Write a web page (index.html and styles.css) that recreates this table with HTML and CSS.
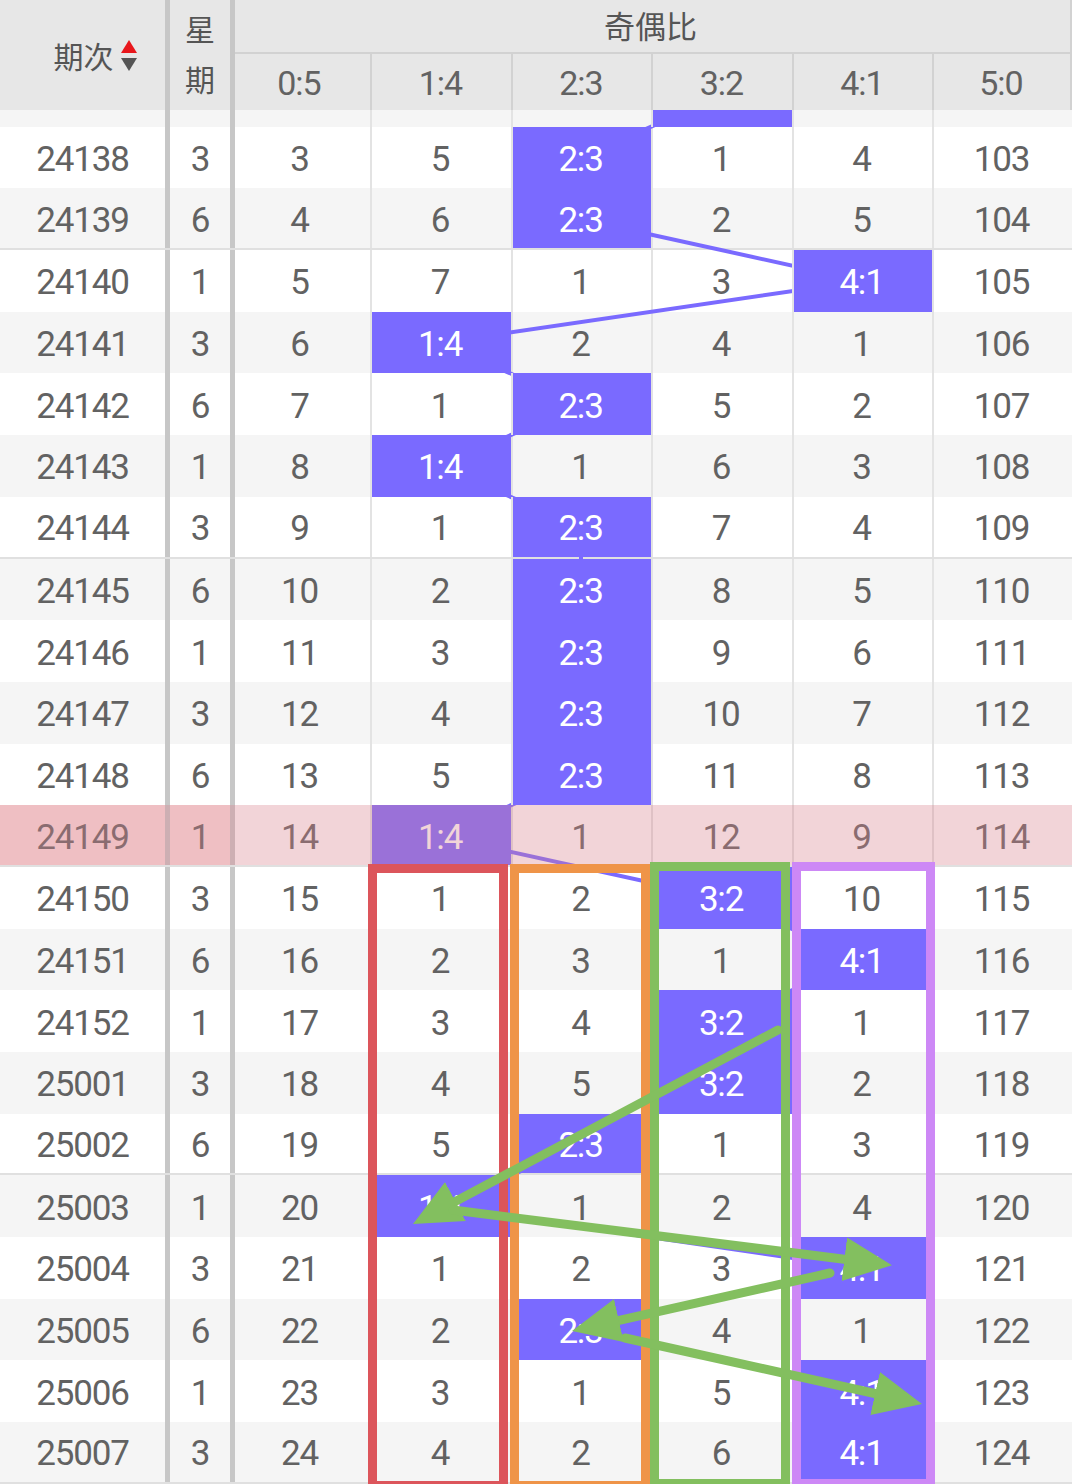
FILE: index.html
```html
<!DOCTYPE html>
<html lang="zh">
<head>
<meta charset="utf-8">
<title>奇偶比走势</title>
<link rel="stylesheet" href="styles.css">
</head>
<body>
<div class="page">
  <div class="head">
    <div class="h-issue"><span>期次</span>
      <svg class="sort" width="18" height="34" viewBox="0 0 18 34"><path d="M9 1 L17 14 L1 14 Z" fill="#e8171c"/><path d="M1 19 L17 19 L9 32 Z" fill="#555"/></svg>
    </div>
    <div class="h-sep sep-a"></div>
    <div class="h-week">星<br>期</div>
    <div class="h-sep sep-b"></div>
    <div class="h-group">奇偶比</div>
    <div class="h-sub c05">0:5</div>
    <div class="h-sub">1:4</div>
    <div class="h-sub">2:3</div>
    <div class="h-sub">3:2</div>
    <div class="h-sub">4:1</div>
    <div class="h-sub last">5:0</div>
  </div>

  <div class="body">
    <div class="rows">
      <div class="row g"><div class="c"></div><div class="s"></div><div class="c"></div><div class="s"></div><div class="c z"></div><div class="c d"></div><div class="c d"></div><div class="c d p"></div><div class="c d"></div><div class="c d"></div></div>
      <div class="row"><div class="c">24138</div><div class="s"></div><div class="c">3</div><div class="s"></div><div class="c z">3</div><div class="c d">5</div><div class="c d p">2:3</div><div class="c d">1</div><div class="c d">4</div><div class="c d">103</div></div>
      <div class="row g five"><div class="c">24139</div><div class="s"></div><div class="c">6</div><div class="s"></div><div class="c z">4</div><div class="c d">6</div><div class="c d p">2:3</div><div class="c d">2</div><div class="c d">5</div><div class="c d">104</div></div>
      <div class="row"><div class="c">24140</div><div class="s"></div><div class="c">1</div><div class="s"></div><div class="c z">5</div><div class="c d">7</div><div class="c d">1</div><div class="c d">3</div><div class="c d p">4:1</div><div class="c d">105</div></div>
      <div class="row g"><div class="c">24141</div><div class="s"></div><div class="c">3</div><div class="s"></div><div class="c z">6</div><div class="c d p">1:4</div><div class="c d">2</div><div class="c d">4</div><div class="c d">1</div><div class="c d">106</div></div>
      <div class="row"><div class="c">24142</div><div class="s"></div><div class="c">6</div><div class="s"></div><div class="c z">7</div><div class="c d">1</div><div class="c d p">2:3</div><div class="c d">5</div><div class="c d">2</div><div class="c d">107</div></div>
      <div class="row g"><div class="c">24143</div><div class="s"></div><div class="c">1</div><div class="s"></div><div class="c z">8</div><div class="c d p">1:4</div><div class="c d">1</div><div class="c d">6</div><div class="c d">3</div><div class="c d">108</div></div>
      <div class="row five"><div class="c">24144</div><div class="s"></div><div class="c">3</div><div class="s"></div><div class="c z">9</div><div class="c d">1</div><div class="c d p">2:3</div><div class="c d">7</div><div class="c d">4</div><div class="c d">109</div></div>
      <div class="row g"><div class="c">24145</div><div class="s"></div><div class="c">6</div><div class="s"></div><div class="c z">10</div><div class="c d">2</div><div class="c d p">2:3</div><div class="c d">8</div><div class="c d">5</div><div class="c d">110</div></div>
      <div class="row"><div class="c">24146</div><div class="s"></div><div class="c">1</div><div class="s"></div><div class="c z">11</div><div class="c d">3</div><div class="c d p">2:3</div><div class="c d">9</div><div class="c d">6</div><div class="c d">111</div></div>
      <div class="row g"><div class="c">24147</div><div class="s"></div><div class="c">3</div><div class="s"></div><div class="c z">12</div><div class="c d">4</div><div class="c d p">2:3</div><div class="c d">10</div><div class="c d">7</div><div class="c d">112</div></div>
      <div class="row"><div class="c">24148</div><div class="s"></div><div class="c">6</div><div class="s"></div><div class="c z">13</div><div class="c d">5</div><div class="c d p">2:3</div><div class="c d">11</div><div class="c d">8</div><div class="c d">113</div></div>
      <div class="row hl five"><div class="c fz">24149</div><div class="s"></div><div class="c fz">1</div><div class="s"></div><div class="c z">14</div><div class="c d p">1:4</div><div class="c d">1</div><div class="c d">12</div><div class="c d">9</div><div class="c d">114</div></div>
      <div class="row"><div class="c">24150</div><div class="s"></div><div class="c">3</div><div class="s"></div><div class="c z">15</div><div class="c d">1</div><div class="c d">2</div><div class="c d p">3:2</div><div class="c d">10</div><div class="c d">115</div></div>
      <div class="row g"><div class="c">24151</div><div class="s"></div><div class="c">6</div><div class="s"></div><div class="c z">16</div><div class="c d">2</div><div class="c d">3</div><div class="c d">1</div><div class="c d p">4:1</div><div class="c d">116</div></div>
      <div class="row"><div class="c">24152</div><div class="s"></div><div class="c">1</div><div class="s"></div><div class="c z">17</div><div class="c d">3</div><div class="c d">4</div><div class="c d p">3:2</div><div class="c d">1</div><div class="c d">117</div></div>
      <div class="row g"><div class="c">25001</div><div class="s"></div><div class="c">3</div><div class="s"></div><div class="c z">18</div><div class="c d">4</div><div class="c d">5</div><div class="c d p">3:2</div><div class="c d">2</div><div class="c d">118</div></div>
      <div class="row five"><div class="c">25002</div><div class="s"></div><div class="c">6</div><div class="s"></div><div class="c z">19</div><div class="c d">5</div><div class="c d p">2:3</div><div class="c d">1</div><div class="c d">3</div><div class="c d">119</div></div>
      <div class="row g"><div class="c">25003</div><div class="s"></div><div class="c">1</div><div class="s"></div><div class="c z">20</div><div class="c d p">1:4</div><div class="c d">1</div><div class="c d">2</div><div class="c d">4</div><div class="c d">120</div></div>
      <div class="row"><div class="c">25004</div><div class="s"></div><div class="c">3</div><div class="s"></div><div class="c z">21</div><div class="c d">1</div><div class="c d">2</div><div class="c d">3</div><div class="c d p">4:1</div><div class="c d">121</div></div>
      <div class="row g"><div class="c">25005</div><div class="s"></div><div class="c">6</div><div class="s"></div><div class="c z">22</div><div class="c d">2</div><div class="c d p">2:3</div><div class="c d">4</div><div class="c d">1</div><div class="c d">122</div></div>
      <div class="row"><div class="c">25006</div><div class="s"></div><div class="c">1</div><div class="s"></div><div class="c z">23</div><div class="c d">3</div><div class="c d">1</div><div class="c d">5</div><div class="c d p">4:1</div><div class="c d">123</div></div>
      <div class="row g five"><div class="c">25007</div><div class="s"></div><div class="c">3</div><div class="s"></div><div class="c z">24</div><div class="c d">4</div><div class="c d">2</div><div class="c d">6</div><div class="c d p">4:1</div><div class="c d">124</div></div>

      <svg class="trend" width="1072" height="1430" viewBox="0 0 1072 1430">
        <polyline points="721,30.85 581,92.55 581,154.25 862,215.95 440,277.65 581,339.35 440,401.05 581,462.75 581,524.45 581,586.15 581,647.85 581,709.55 440,771.25 721,832.95 862,894.65 721,956.35 721,1018.05 581,1079.75 440,1141.45 862,1203.15 581,1264.85 862,1326.55 862,1388.25" fill="none" stroke="#7a6aff" stroke-width="4" stroke-linejoin="round"/>
      </svg>
    </div>
  </div>

  <div class="box box-red"></div>
  <div class="box box-orange"></div>
  <div class="box box-green"></div>
  <div class="box box-lilac"></div>

  <svg class="arrows" width="1072" height="1484" viewBox="0 0 1072 1484">
    <defs>
      <marker id="ah" markerUnits="userSpaceOnUse" markerWidth="50" markerHeight="46" refX="18" refY="22" orient="auto">
        <path d="M0 0 L48 22 L0 44 Z" fill="#83bf5f"/>
      </marker>
    </defs>
    <g stroke="#83bf5f" stroke-width="9" stroke-linecap="round" fill="none">
      <line x1="778" y1="1030" x2="439.5" y2="1209.9" marker-end="url(#ah)"/>
      <line x1="453" y1="1210" x2="862.2" y2="1261.5" marker-end="url(#ah)"/>
      <line x1="830" y1="1273" x2="601.3" y2="1324.4" marker-end="url(#ah)"/>
      <line x1="625" y1="1338" x2="892.7" y2="1397.5" marker-end="url(#ah)"/>
    </g>
  </svg>
</div>
</body>
</html>
```

FILE: styles.css
```css
html, body {
  margin: 0;
  padding: 0;
  background: #ffffff;
  overflow: hidden;
}

.page {
  position: relative;
  width: 1072px;
  height: 1484px;
  overflow: hidden;
  font-family: Roboto, "Noto Sans", "Noto Sans CJK SC", sans-serif;
  color: #555555;
}

/* ---------- header ---------- */
.head {
  display: grid;
  grid-template-columns: 165px 5px 60px 5px 135px 141px 140px 141px 140px 1fr;
  grid-template-rows: 54px 56px;
  height: 110px;
  background: #e7e7e7;
  font-family: "Noto Sans CJK SC", "Noto Sans", sans-serif;
  color: #555555;
}

.h-issue {
  grid-column: 1;
  grid-row: 1 / 3;
  display: flex;
  align-items: center;
  justify-content: center;
  padding-left: 26px;
  gap: 6px;
  font-size: 30px;
}

.sort {
  display: block;
  margin-top: 2px;
}

.h-sep {
  grid-row: 1 / 3;
  background: #c7c7c7;
}
.sep-a { grid-column: 2; }
.sep-b { grid-column: 4; }

.h-week {
  grid-column: 3;
  grid-row: 1 / 3;
  display: flex;
  align-items: center;
  justify-content: center;
  text-align: center;
  font-size: 30px;
  line-height: 50px;
  padding-bottom: 4px;
}

.h-group {
  grid-column: 5 / 11;
  grid-row: 1;
  display: flex;
  align-items: center;
  justify-content: center;
  font-size: 31px;
  border-bottom: 2px solid #d2d2d2;
  border-right: 2px solid #d2d2d2;
  padding-bottom: 4px;
  padding-right: 4px;
}

.h-sub {
  grid-row: 2;
  display: flex;
  align-items: center;
  justify-content: center;
  font-family: Roboto, "Noto Sans", sans-serif;
  font-weight: 400;
  font-size: 34px;
  letter-spacing: -1px;
  color: #626262;
  border-left: 2px solid #d2d2d2;
  padding-top: 2px;
  padding-right: 2px;
}
.h-sub.c05 { border-left: none; padding-right: 7px; }
.h-sub.last { border-right: 2px solid #d2d2d2; }

/* ---------- body ---------- */
.body {
  height: 1374px;
  overflow: hidden;
}

.rows {
  position: relative;
  margin-top: -45px;
}

.row {
  display: grid;
  grid-template-columns: 165px 5px 60px 5px 135px 141px 140px 141px 140px 1fr;
  height: 61.7px;
  box-sizing: border-box;
  background: #ffffff;
  font-weight: 400;
  font-size: 35px;
  letter-spacing: -1.2px;
  color: #626262;
}

.row.g { background: #f5f5f5; }
.row.five { border-bottom: 2px solid #e0e0e0; }

.c {
  display: flex;
  align-items: center;
  justify-content: center;
  padding-top: 4px;
}

.s { background: #c7c7c7; }

.z { padding-right: 6px; }

.d {
  border-left: 2px solid #e3e3e3;
  padding-right: 3px;
}

.p {
  position: relative;
  z-index: 2;
  background: #7a6aff;
  color: #ffffff;
}

/* highlighted (current) row */
.row.hl { position: relative; }
.row.hl .fz { background: #fae0df; }
.row.hl::after {
  content: "";
  position: absolute;
  left: 0;
  top: 0;
  right: 0;
  bottom: 0;
  background: rgba(217, 130, 140, 0.34);
  z-index: 3;
}

.trend {
  position: absolute;
  left: 0;
  top: 0;
  z-index: 1;
  pointer-events: none;
}

/* ---------- annotation overlays ---------- */
.box {
  position: absolute;
  box-sizing: border-box;
  border: 9px solid;
  z-index: 10;
  height: 626px;
}
.box-red    { left: 368px; top: 864px; width: 140px; border-color: #dc555b; }
.box-orange { left: 510px; top: 864px; width: 140px; border-color: #ef9448; }
.box-green  { left: 650px; top: 862px; width: 140px; border-color: #83bf5f; }
.box-lilac  { left: 792px; top: 862px; width: 143px; border-color: #cd88f6; }

.arrows {
  position: absolute;
  left: 0;
  top: 0;
  z-index: 11;
  pointer-events: none;
}
```
